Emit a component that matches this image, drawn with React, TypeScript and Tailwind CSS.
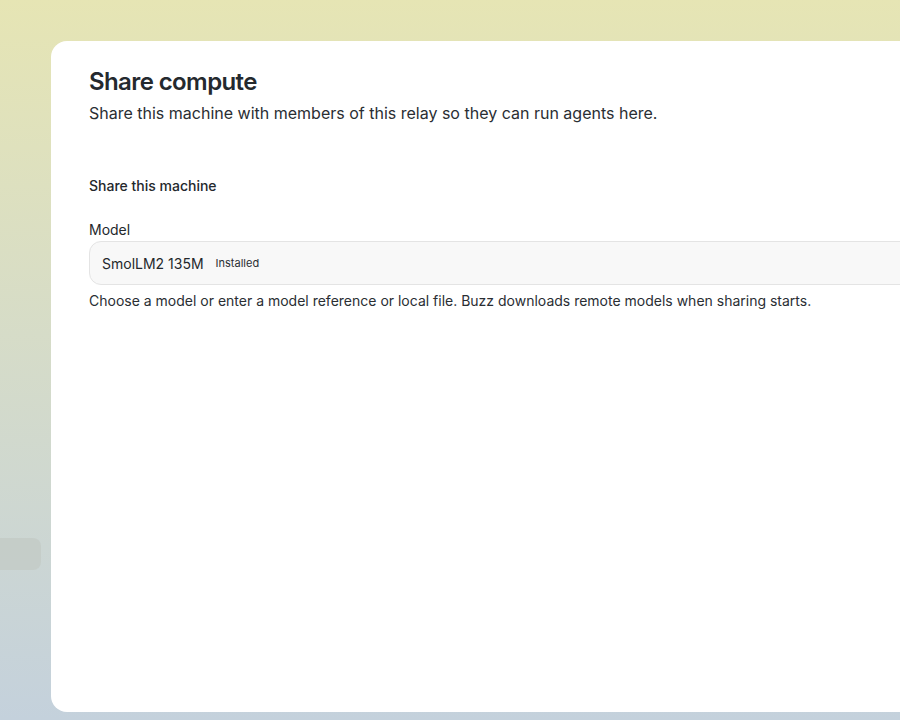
export default function App() {
  return (
    <div
      className="w-[900px] h-[720px] overflow-hidden flex bg-gradient-to-b from-[#e6e5b4] to-[#c4d1dc]"
      style={{ fontFamily: "Inter, 'Noto Sans', sans-serif" }}
    >
      <aside className="w-[51px] shrink-0 flex flex-col">
        <div className="mt-[538px] w-[41px] h-[32px] rounded-r-[8px] bg-[#c3cac5]/80" />
      </aside>
      <div className="flex-1 min-w-0 pt-[41px] pb-[8px]">
        <main className="w-[900px] h-full bg-white rounded-l-[16px] pl-[38px] pt-[25px]">
          <h1 className="text-[24px] leading-[32px] font-semibold text-[#24292e] tracking-[-0.6px]">
            Share compute
          </h1>
          <p className="mt-[3px] text-[16px] leading-[24px] text-[#2a2e33]">
            Share this machine with members of this relay so they can run agents here.
          </p>
          <h2 className="mt-[51px] text-[14px] leading-[20px] font-medium text-[#24282c]">
            Share this machine
          </h2>
          <label className="block mt-[24px] text-[14px] leading-[20px] text-[#24282c]">Model</label>
          <div className="mt-[1px] h-[44px] w-[900px] rounded-[12px] border border-[#e4e4e4] bg-[#f8f8f8] flex items-center pl-[12px] gap-[12px]">
            <span className="text-[14px] text-[#24282c]">SmolLM2 135M</span>
            <span className="text-[11px] text-[#2a2e33]">Installed</span>
          </div>
          <p className="mt-[6px] text-[14px] leading-[20px] text-[#2a2e33]">
            Choose a model or enter a model reference or local file. Buzz downloads remote models when sharing starts.
          </p>
        </main>
      </div>
    </div>
  );
}
